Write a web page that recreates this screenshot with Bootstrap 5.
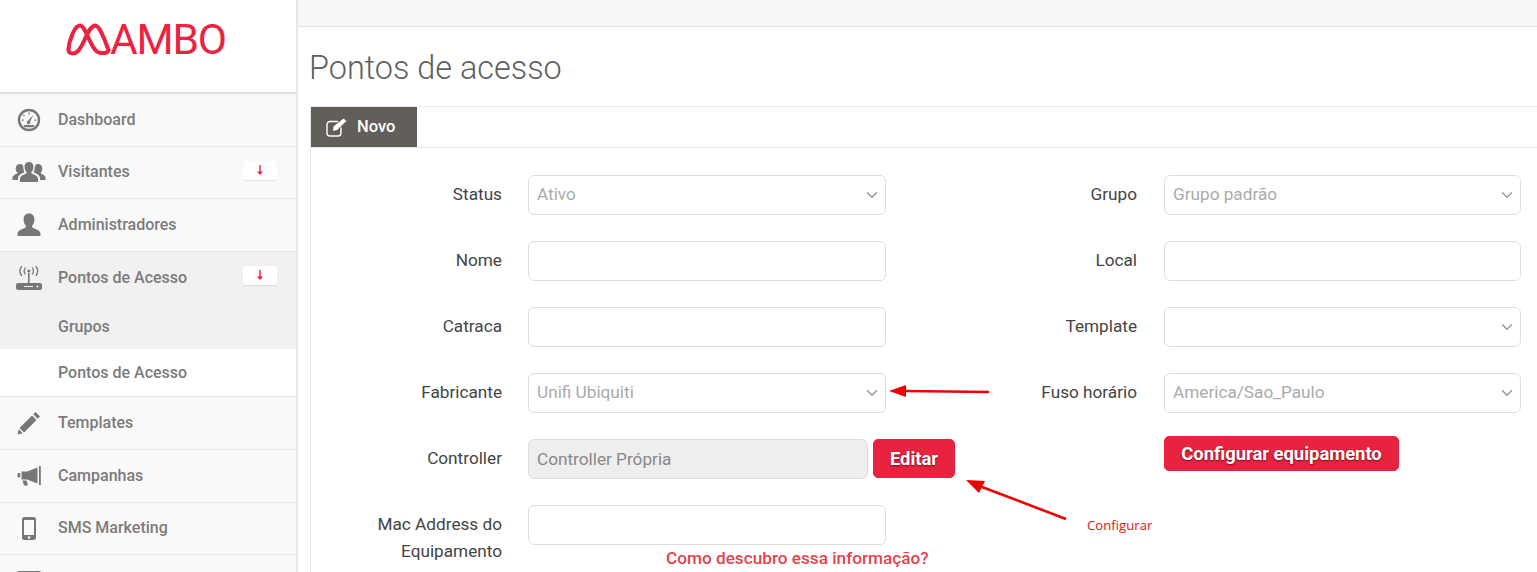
<!DOCTYPE html>
<html lang="pt-BR">
<head>
  <meta charset="UTF-8">
  <meta name="viewport" content="width=device-width, initial-scale=1.0">
  <title>Pontos de acesso</title>
  <link href="https://cdn.jsdelivr.net/npm/bootstrap@5.3.3/dist/css/bootstrap.min.css" rel="stylesheet">
  <style>
    html, body { height: 572px; overflow: hidden; }
    body { font-family: Roboto, "Liberation Sans", sans-serif; background: #fff; color: #444; position: relative; }

    /* sidebar */
    .side-col { width: 298px; flex: none; height: 572px; background: #f9f9f9; border-right: 2px solid #e6e6e6; overflow: hidden; }
    .brand { height: 94px; background: #fff; border-bottom: 2px solid #dedede; padding: 23px 0 0 66px; color: #ec2340; }
    .brand-word { font-size: 42.5px; line-height: 33px; letter-spacing: -1.2px; margin-left: -4px; font-weight: 400; }
    .side-item { display: flex; align-items: center; height: 52.6px; border-bottom: 1px solid #e6e6e6; color: #7b7b7b; font-size: 16px; font-weight: 500; position: relative; }
    .side-ico { width: 58px; flex: none; display: flex; justify-content: center; }
    .side-ico svg { fill: #777; display: block; }
    .side-open { background: #f1f1f1; border-bottom: 0; }
    .side-sub { height: 45px; padding-left: 58px; background: #f1f1f1; color: #7b7b7b; font-size: 16px; font-weight: 500; display: flex; align-items: center; }
    .side-sub-on { background: #fff; height: 48px; border-bottom: 1px solid #e6e6e6; }
    .side-tag { position: absolute; left: 243px; top: 14px; width: 34px; height: 19px; background: #fff; border-radius: 3px; box-shadow: 0 1px 1px rgba(0,0,0,.1); display: flex; align-items: center; justify-content: center; }

    /* main */
    .top-strip { height: 27px; background: #f8f8f8; border-bottom: 1px solid #e2e2e2; }
    .page-title { font-size: 32.4px; font-weight: 300; color: #5f5f5f; margin: 0; padding: 22px 0 0 11px; height: 79px; line-height: 39px; }
    .tab-panel { margin-left: 12px; border-left: 1px solid #e8e8e8; border-top: 1px solid #e8e8e8; height: 470px; overflow: hidden; }
    .tab-bar { height: 41px; border-bottom: 1px solid #e4e4e4; }
    .tab-on { width: 106px; height: 40px; background: #625f5a; color: #fff; font-size: 16.5px; font-weight: 500; display: flex; align-items: center; padding-left: 15px; gap: 9px; }
    .form-wrap { display: flex; padding-top: 27px; width: 1270px; }
    .form-half { width: 635px; flex: none; }
    .field-row { display: flex; gap: 27px; margin-bottom: 26px; }
    .field-label { width: 191px; flex: none; text-align: right; font-size: 17.2px; line-height: 27px; color: #444; padding-top: 6px; margin: 0; }
    .field-box { width: 357px; flex: none; }
    .half-left .field-row { gap: 26px; }
    .half-left .field-box { width: 358px; }
    .field-box .form-control, .field-box .form-select { height: 40px; border-color: #dedede; border-radius: 6px; font-size: 17.2px; color: #aaa; padding-left: 8px; box-shadow: none; }
    .field-box .form-select { background-image: url("data:image/svg+xml,%3csvg xmlns='http://www.w3.org/2000/svg' viewBox='0 0 16 16'%3e%3cpath fill='none' stroke='%23999' stroke-linecap='round' stroke-linejoin='round' stroke-width='2' d='m2 5 6 6 6-6'/%3e%3c/svg%3e"); background-position: right 7px center; background-size: 12px 12px; }
    .field-box .form-control[readonly] { background: #eee; color: #888; width: 340px; flex: 0 0 340px; }
    .red-btn { background: #e8233f; color: #fff; border: 1px solid #e8233f; border-radius: 5px; font-weight: 700; font-size: 18.4px; text-shadow: 0 1px 2px rgba(0,0,0,.5); padding: 0; white-space: nowrap; }
    .red-btn:hover { background: #d81d38; color: #fff; }
    .edit-gap { gap: 5px; }
    .edit-btn { flex: 0 0 82px; width: 82px; height: 39px; }
    .conf-btn { width: 235px; height: 35px; margin-top: -3px; display: block; }
    .help-link { display: block; color: #e4434f; font-size: 17.2px; font-weight: 500; white-space: nowrap; text-decoration: none; padding-left: 138px; margin-top: 1px; line-height: 24px; }

    /* annotations drawn on top of the screenshot */
    .note-layer { position: absolute; left: 0; top: 0; pointer-events: none; }
    .note-text { position: absolute; left: 1087px; top: 516px; color: #f01010; font-family: "Open Sans", sans-serif; font-size: 13.2px; line-height: 18px; }
  </style>
</head>
<body>
  <div class="d-flex">
    <aside class="side-col">
      <div class="brand d-flex align-items-start">
        <svg width="48" height="33" viewBox="0 0 48 33" fill="none" stroke="currentColor" stroke-width="4" stroke-linecap="round" stroke-linejoin="round">
          <path d="M2.500 26C3 19 8 2.500 14 2.500 20 2.500 25 28 33 29.500 37 30.500 42 30.500 42.500 27"/>
          <path d="M2.500 26C2 31 8 32 12 28 18 22 22 3.500 29 2.500 34 2.500 39 18 42.500 27"/>
        </svg>
        <span class="brand-word">AMBO</span>
      </div>
      <div class="side-item">
        <span class="side-ico">
          <svg width="24" height="24" viewBox="0 0 24 24"><path fill-rule="evenodd" d="M12 .8a11.200 11.200 0 1 1 0 22.400A11.200 11.200 0 0 1 12 .8zm0 2.400a8.800 8.800 0 1 0 0 17.600 8.800 8.800 0 0 0 0-17.600z"/><path d="M16.600 6.500l-3.400 7a1.800 1.800 0 1 1-1.900-.9zM4.800 11.600h2v1.200h-2zM17.200 11.600h2v1.200h-2zM6.600 6.400l1.400 1.400-.8.800-1.400-1.400zM11.400 4.600h1.200v2h-1.200zM6.500 17h11l-1.200 2.200H7.700z"/></svg>
        </span>
        Dashboard
      </div>
      <div class="side-item">
        <span class="side-ico">
          <svg width="34" height="22" viewBox="0 0 34 22"><path d="M17 1c3 0 4.600 2.400 4.400 5.400-.1 2-1 3.600-2 4.600-.4.900.1 1.500 1.300 2 2.300 1 5.300 2.400 5.300 4.500V21H8v-3.500c0-2.100 3-3.500 5.300-4.500 1.200-.5 1.700-1.100 1.300-2-1-1-1.900-2.600-2-4.600C12.400 3.400 14 1 17 1z"/><path d="M8 3c2 0 3.200 1.500 3.300 3.500.1 2 .5 3.400 1.200 4.800-2 1-6.500 2.500-6.500 6V19H.5v-2.500c0-1.500 2.200-2.700 3.800-3.400.9-.4 1.200-.9.900-1.500-.8-.8-1.500-2-1.500-3.800C3.700 5 5.500 3 8 3zM26 3c2.500 0 4.300 2 4.300 4.800 0 1.800-.7 3-1.500 3.800-.3.600 0 1.100.9 1.500 1.600.7 3.800 1.900 3.800 3.400V19H28v-1.700c0-3.500-4.500-5-6.500-6 .7-1.400 1.100-2.800 1.200-4.800C22.800 4.500 24 3 26 3z"/></svg>
        </span>
        Visitantes
        <span class="side-tag"><svg width="6" height="10" viewBox="0 0 6 10"><path d="M2.300 0h1.400v6.500H6L3 10 0 6.500h2.300z" fill="#ec2340"/></svg></span>
      </div>
      <div class="side-item">
        <span class="side-ico">
          <svg width="24" height="24" viewBox="0 0 24 24"><path d="M12 .5c3.500 0 5.400 2.500 5.400 6 0 2.500-.9 4.800-2.300 6.200-.5 1.200.2 1.900 1.700 2.500 2.800 1.100 6.600 2.400 6.600 5.300v2.500H.6v-2.500c0-2.900 3.800-4.200 6.600-5.300 1.500-.6 2.200-1.300 1.700-2.500C7.500 11.300 6.600 9 6.600 6.500c0-3.500 1.900-6 5.400-6z"/></svg>
        </span>
        Administradores
      </div>
      <div class="side-item side-open">
        <span class="side-ico">
          <svg width="26" height="24" viewBox="0 0 26 24"><path d="M12 7h1.600v10H12zM2 17h22a2 2 0 0 1 2 2v3a2 2 0 0 1-2 2H2a2 2 0 0 1-2-2v-3a2 2 0 0 1 2-2z"/><circle cx="12.800" cy="5" r="1.600"/><circle cx="21.500" cy="20.500" r="1" fill="#f1f1f1"/><path d="M8 20h9v1H8z" fill="#f1f1f1"/><path d="M9.400 1.500C8 3.500 8 6.500 9.400 8.500M16.200 1.500c1.400 2 1.400 5 0 7M5.800 0C3.600 3 3.600 7 5.800 10M19.800 0c2.200 3 2.200 7 0 10" fill="none" stroke="#777" stroke-width="1.300"/></svg>
        </span>
        Pontos de Acesso
        <span class="side-tag"><svg width="6" height="10" viewBox="0 0 6 10"><path d="M2.300 0h1.400v6.500H6L3 10 0 6.500h2.300z" fill="#ec2340"/></svg></span>
      </div>
      <div class="side-sub">Grupos</div>
      <div class="side-sub side-sub-on">Pontos de Acesso</div>
      <div class="side-item">
        <span class="side-ico">
          <svg width="24" height="24" viewBox="0 0 24 24"><path d="M18.500 1l4.500 4.500-2.300 2.300-4.500-4.500zM15 4.500L19.500 9 7 21.500 2.500 17zM1.700 18.300l4 4L.5 23.500z"/></svg>
        </span>
        Templates
      </div>
      <div class="side-item">
        <span class="side-ico">
          <svg width="24" height="20" viewBox="0 0 24 20"><path d="M22 0h1.800v19H22zM20.500 1.500v16L10 13.500H4.500v-8H10zM1.500 7h1.700v4.500H1.500a1 1 0 0 1-1-1V8a1 1 0 0 1 1-1zM5.500 14.500h4l1.500 5H7z"/></svg>
        </span>
        Campanhas
      </div>
      <div class="side-item">
        <span class="side-ico">
          <svg width="14" height="23" viewBox="0 0 14 23"><path fill-rule="evenodd" d="M2.500 0h9A2.500 2.500 0 0 1 14 2.500v18a2.500 2.500 0 0 1-2.500 2.500h-9A2.500 2.500 0 0 1 0 20.500v-18A2.500 2.500 0 0 1 2.500 0zM2 3v15h10V3z"/><circle cx="7" cy="20.500" r="1.300" fill="#f9f9f9"/></svg>
        </span>
        SMS Marketing
      </div>
      <div class="side-item align-items-start pt-3">
        <span class="side-ico">
          <svg width="24" height="20" viewBox="0 0 24 20"><rect width="24" height="20" rx="2"/></svg>
        </span>
      </div>
    </aside>

    <main class="flex-grow-1 overflow-hidden">
      <div class="top-strip"></div>
      <h1 class="page-title">Pontos de acesso</h1>
      <section class="tab-panel">
        <div class="tab-bar">
          <div class="tab-on">
            <svg width="22" height="20" viewBox="0 0 22 20" fill="none" stroke="#fff" stroke-width="1.400"><path d="M15 10.500V16a3 3 0 0 1-3 3H4a3 3 0 0 1-3-3V7.500a3 3 0 0 1 3-3h8"/><path d="M7.500 9.500L17.500 1.500 20.500 4 11 13l-4 1z" fill="#fff" stroke="none"/></svg>
            Novo
          </div>
        </div>
        <form class="form-wrap">
          <div class="form-half half-left">
            <div class="field-row">
              <label class="field-label">Status</label>
              <div class="field-box"><select class="form-select"><option>Ativo</option></select></div>
            </div>
            <div class="field-row">
              <label class="field-label">Nome</label>
              <div class="field-box"><input class="form-control" type="text"></div>
            </div>
            <div class="field-row">
              <label class="field-label">Catraca</label>
              <div class="field-box"><input class="form-control" type="text"></div>
            </div>
            <div class="field-row">
              <label class="field-label">Fabricante</label>
              <div class="field-box"><select class="form-select"><option>Unifi Ubiquiti</option></select></div>
            </div>
            <div class="field-row">
              <label class="field-label">Controller</label>
              <div class="field-box d-flex edit-gap">
                <input class="form-control" type="text" value="Controller Própria" readonly>
                <button type="button" class="btn red-btn edit-btn">Editar</button>
              </div>
            </div>
            <div class="field-row">
              <label class="field-label">Mac Address do Equipamento</label>
              <div class="field-box">
                <input class="form-control" type="text">
                <a class="help-link" href="#">Como descubro essa informação?</a>
              </div>
            </div>
          </div>
          <div class="form-half">
            <div class="field-row">
              <label class="field-label">Grupo</label>
              <div class="field-box"><select class="form-select"><option>Grupo padrão</option></select></div>
            </div>
            <div class="field-row">
              <label class="field-label">Local</label>
              <div class="field-box"><input class="form-control" type="text"></div>
            </div>
            <div class="field-row">
              <label class="field-label">Template</label>
              <div class="field-box"><select class="form-select"><option></option></select></div>
            </div>
            <div class="field-row">
              <label class="field-label">Fuso horário</label>
              <div class="field-box"><select class="form-select"><option>America/Sao_Paulo</option></select></div>
            </div>
            <div class="field-row">
              <div class="field-label"></div>
              <div class="field-box"><button type="button" class="btn red-btn conf-btn">Configurar equipamento</button></div>
            </div>
          </div>
        </form>
      </section>
    </main>
  </div>

  <!-- red annotations on the screenshot -->
  <svg class="note-layer" width="1537" height="572" viewBox="0 0 1537 572">
    <path d="M989 392L905 391" stroke="#f00000" stroke-width="2.600"/>
    <path d="M889 391L906 385V397z" fill="#f00000"/>
    <path d="M1066 519L982 487" stroke="#f00000" stroke-width="2.600"/>
    <path d="M966 480L985 481 979 493z" fill="#f00000"/>
  </svg>
  <span class="note-text">Configurar</span>

  <script src="https://cdn.jsdelivr.net/npm/bootstrap@5.3.3/dist/js/bootstrap.bundle.min.js"></script>
</body>
</html>
